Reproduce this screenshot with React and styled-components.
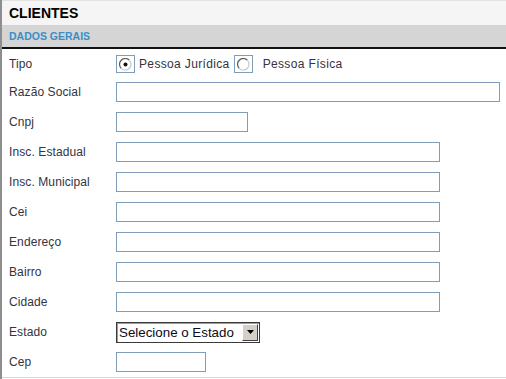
import styled, { createGlobalStyle } from "styled-components";

const GlobalStyle = createGlobalStyle`
  html, body {
    margin: 0;
    padding: 0;
    background: #ffffff;
  }
  body {
    font-family: "Liberation Sans", Arial, sans-serif;
  }
`;

const fields = [
  { label: "Razão Social", width: 384 },
  { label: "Cnpj", width: 132 },
  { label: "Insc. Estadual", width: 324 },
  { label: "Insc. Municipal", width: 324 },
  { label: "Cei", width: 324 },
  { label: "Endereço", width: 324 },
  { label: "Bairro", width: 324 },
  { label: "Cidade", width: 324 },
];

const Radio = ({ checked }) => (
  <RadioBox>
    <svg width="13" height="13" viewBox="0 0 13 13">
      <path d="M2.2 10.3 A5.5 5.5 0 0 1 10.3 2.2" fill="none" stroke="#5a5a5a" strokeWidth="1.2" />
      <path d="M10.3 2.2 A5.5 5.5 0 0 1 2.2 10.3" fill="none" stroke="#c8c8c8" strokeWidth="1.2" />
      <circle cx="6.5" cy="6.5" r="4.4" fill="#ffffff" />
      {checked && <circle cx="6.5" cy="6.5" r="2" fill="#111111" />}
    </svg>
  </RadioBox>
);

const App = () => {
  return (
    <>
      <GlobalStyle />
      <Panel>
        <TitleBar>CLIENTES</TitleBar>
        <SectionBar>DADOS GERAIS</SectionBar>
        <Form>
          <Row $first>
            <Label>Tipo</Label>
            <RadioGroup>
              <Radio checked />
              <RadioText>Pessoa Jurídica</RadioText>
              <Radio />
              <RadioText $wide>Pessoa Física</RadioText>
            </RadioGroup>
          </Row>
          {fields.map((f) => (
            <Row key={f.label}>
              <Label>{f.label}</Label>
              <TextInput type="text" $width={f.width} />
            </Row>
          ))}
          <Row>
            <Label>Estado</Label>
            <Select>
              <SelectText>Selecione o Estado</SelectText>
              <SelectButton>
                <svg width="7" height="4" viewBox="0 0 7 4">
                  <path d="M0 0 H7 L3.5 4 Z" fill="#000" />
                </svg>
              </SelectButton>
            </Select>
          </Row>
          <Row>
            <Label>Cep</Label>
            <TextInput type="text" $width={90} />
          </Row>
        </Form>
      </Panel>
    </>
  );
};

// Styles

const Panel = styled.div`
  width: 506px;
  height: 379px;
  box-sizing: border-box;
  border-left: 2px solid #8e8e8e;
  overflow: hidden;
`;

const TitleBar = styled.div`
  height: 24px;
  border-top: 1px solid #e2e2e2;
  background: #f5f5f5;
  padding-left: 7px;
  display: flex;
  align-items: center;
  font-size: 14px;
  font-weight: 700;
  color: #000;
`;

const SectionBar = styled.div`
  height: 22px;
  background: #d5d5d5;
  border-bottom: 2px solid #111;
  padding-left: 7px;
  display: flex;
  align-items: center;
  font-size: 10.5px;
  font-weight: 700;
  color: #3a8ec9;
`;

const Form = styled.div`
  display: flex;
  flex-direction: column;
  border-bottom: 1px solid #d8d8d8;
`;

const Row = styled.div`
  box-sizing: border-box;
  display: flex;
  align-items: center;
  height: ${(p) => (p.$first ? "28px" : "30px")};
  padding-top: ${(p) => (p.$first ? "2px" : "0")};
`;

const Label = styled.div`
  width: 107px;
  padding-left: 7px;
  font-size: 12px;
  color: #343340;
  letter-spacing: 0.1px;
`;

const TextInput = styled.input`
  box-sizing: border-box;
  width: ${(p) => p.$width}px;
  height: 20px;
  margin: 0;
  padding: 0 2px;
  border: 1px solid #7f9db9;
  background: #fff;
  outline: none;
`;

const RadioGroup = styled.div`
  display: flex;
  align-items: center;
  font-size: 12px;
  color: #343340;
`;

const RadioBox = styled.div`
  box-sizing: border-box;
  width: 19px;
  height: 18px;
  border: 1px solid #7f9db9;
  display: flex;
  align-items: center;
  justify-content: center;
`;

const RadioText = styled.span`
  margin-left: ${(p) => (p.$wide ? "10px" : "4px")};
  margin-right: 4px;
  letter-spacing: 0.35px;
`;

const Select = styled.div`
  box-sizing: border-box;
  width: 144px;
  height: 21px;
  display: flex;
  align-items: center;
  border: 1px solid #3a3a3a;
  box-shadow: inset 1px 1px 0 #9a9a9a;
  background: #fff;
`;

const SelectText = styled.span`
  flex: 1;
  padding-left: 2px;
  font-size: 13.33px;
  color: #0a0a20;
  white-space: nowrap;
`;

const SelectButton = styled.span`
  box-sizing: border-box;
  width: 16px;
  height: 17px;
  margin-right: 1px;
  display: flex;
  align-items: center;
  justify-content: center;
  background: #d4d0c8;
  border-top: 1px solid #ffffff;
  border-left: 1px solid #ffffff;
  border-right: 1px solid #404040;
  border-bottom: 1px solid #404040;
`;

export default App;
